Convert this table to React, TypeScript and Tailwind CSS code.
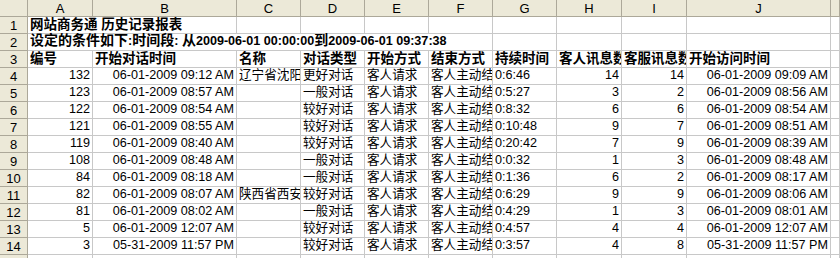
import React from 'react';

const COLS = ['A', 'B', 'C', 'D', 'E', 'F', 'G', 'H', 'I', 'J', ''];

const HEADERS = ['编号', '开始对话时间', '名称', '对话类型', '开始方式', '结束方式', '持续时间', '客人讯息数', '客服讯息数', '开始访问时间'];

const ROWS: [number, string, string, string, string, number, number, string][] = [
  [132, '06-01-2009 09:12 AM', '辽宁省沈阳市', '更好对话', '0:6:46', 14, 14, '06-01-2009 09:09 AM'],
  [123, '06-01-2009 08:57 AM', '', '一般对话', '0:5:27', 3, 2, '06-01-2009 08:56 AM'],
  [122, '06-01-2009 08:54 AM', '', '较好对话', '0:8:32', 6, 6, '06-01-2009 08:54 AM'],
  [121, '06-01-2009 08:55 AM', '', '较好对话', '0:10:48', 9, 7, '06-01-2009 08:51 AM'],
  [119, '06-01-2009 08:40 AM', '', '较好对话', '0:20:42', 7, 9, '06-01-2009 08:39 AM'],
  [108, '06-01-2009 08:48 AM', '', '一般对话', '0:0:32', 1, 3, '06-01-2009 08:48 AM'],
  [84, '06-01-2009 08:18 AM', '', '一般对话', '0:1:36', 6, 2, '06-01-2009 08:17 AM'],
  [82, '06-01-2009 08:07 AM', '陕西省西安市', '较好对话', '0:6:29', 9, 9, '06-01-2009 08:06 AM'],
  [81, '06-01-2009 08:02 AM', '', '一般对话', '0:4:29', 1, 3, '06-01-2009 08:01 AM'],
  [5, '06-01-2009 12:07 AM', '', '较好对话', '0:4:57', 4, 4, '06-01-2009 12:07 AM'],
  [3, '05-31-2009 11:57 PM', '', '较好对话', '0:3:57', 4, 8, '05-31-2009 11:57 PM'],
];

const head = 'bg-[#ece9d8] border-r border-b border-[#aca899] flex items-center justify-center text-[13px] leading-none';
const cell = 'border-r border-b border-[#c8c8c8] px-[2px] overflow-hidden whitespace-nowrap flex items-end pb-[1px] leading-[15px]';
const L = `${cell} justify-start`;
const R = `${cell} justify-end`;

function RowHead({ n }: { n: number | string }) {
  return <div className={head}>{n}</div>;
}

export default function App() {
  return (
    <div
      className="w-[840px] h-[258px] overflow-hidden bg-white text-black text-[12.6px]"
      style={{ fontFamily: '"Liberation Sans", "Noto Sans CJK SC", sans-serif' }}
    >
      <div className="grid grid-cols-[28px_65px_144px_64px_64px_64px_64px_64px_65px_65px_144px_1fr] auto-rows-[17px]">
        {/* column letters */}
        <div className={head} />
        {COLS.map((c, i) => (
          <div key={i} className={head}>{c}</div>
        ))}

        {/* row 1 */}
        <RowHead n={1} />
        <div className={`${L} col-span-2 font-bold text-[13.5px] overflow-visible`}>网站商务通 历史记录报表</div>
        {[...Array(9)].map((_, i) => <div key={i} className={cell} />)}

        {/* row 2 */}
        <RowHead n={2} />
        <div className={`${L} col-span-6 font-bold overflow-visible`}>
          <span>
            <span className="text-[14px]">设定的条件如下</span>:<span className="text-[14px]">时间段</span>:{' '}
            <span className="text-[14px]">从</span>2009-06-01 00:00:00<span className="text-[14px]">到</span>2009-06-01 09:37:38
          </span>
        </div>
        {[...Array(5)].map((_, i) => <div key={i} className={cell} />)}

        {/* row 3 headers */}
        <RowHead n={3} />
        {HEADERS.map((h, i) => (
          <div key={i} className={`${L} font-bold text-[13.5px]`}>{h}</div>
        ))}
        <div className={cell} />

        {ROWS.map((r, i) => (
          <React.Fragment key={i}>
            <RowHead n={i + 4} />
            <div className={R}>{r[0]}</div>
            <div className={R}>{r[1]}</div>
            <div className={L}>{r[2]}</div>
            <div className={L}>{r[3]}</div>
            <div className={L}>客人请求</div>
            <div className={L}>客人主动结束</div>
            <div className={L}>{r[4]}</div>
            <div className={R}>{r[5]}</div>
            <div className={R}>{r[6]}</div>
            <div className={R}>{r[7]}</div>
            <div className={cell} />
          </React.Fragment>
        ))}

        <RowHead n={15} />
        {[...Array(11)].map((_, i) => <div key={i} className={cell} />)}
      </div>
    </div>
  );
}
